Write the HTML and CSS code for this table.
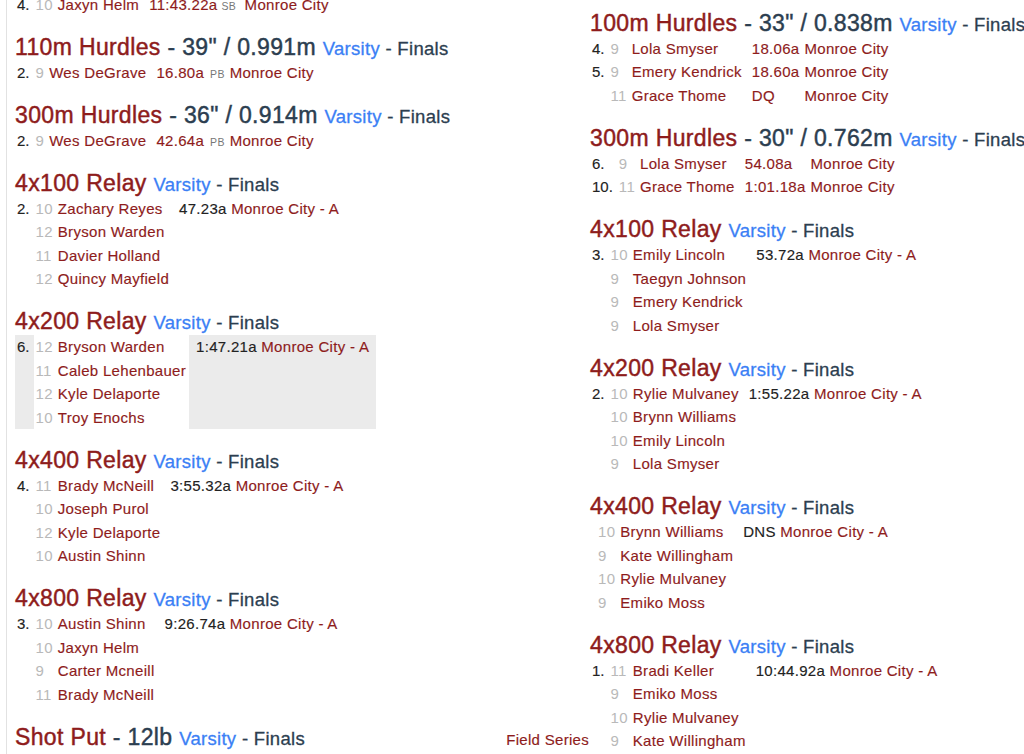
FILE: index.html
```html
<!DOCTYPE html>
<html lang="en">
<head>
<meta charset="utf-8">
<title>Results</title>
<link rel="stylesheet" href="styles.css">
</head>
<body>
<div class="page">
  <div class="sheet">
    <div class="col col-left">
      <div class="event">
        <table class="res prev">
          <tr><td class="pl">4.</td><td class="gr">10</td><td class="nm wide">Jaxyn Helm</td><td class="mk ind">11:43.22a<span class="tag tight">SB</span></td><td class="tm far">Monroe City</td></tr>
        </table>
      </div>

      <div class="event">
        <h3 class="ev-title"><span><span class="ev">110m Hurdles</span><span class="dim"> - 39" / 0.991m</span> <span class="lvl">Varsity</span><span class="rnd"> - Finals</span></span></h3>
        <table class="res">
          <tr><td class="pl">2.</td><td class="gr">9</td><td class="nm">Wes DeGrave</td><td class="mk ind">16.80a<span class="tag">PB</span></td><td class="tm">Monroe City</td></tr>
        </table>
      </div>

      <div class="event">
        <h3 class="ev-title"><span><span class="ev">300m Hurdles</span><span class="dim"> - 36" / 0.914m</span> <span class="lvl">Varsity</span><span class="rnd"> - Finals</span></span></h3>
        <table class="res">
          <tr><td class="pl">2.</td><td class="gr">9</td><td class="nm">Wes DeGrave</td><td class="mk ind">42.64a<span class="tag">PB</span></td><td class="tm">Monroe City</td></tr>
        </table>
      </div>

      <div class="event">
        <h3 class="ev-title"><span><span class="ev">4x100 Relay</span> <span class="lvl">Varsity</span><span class="rnd"> - Finals</span></span></h3>
        <table class="res">
          <tr><td class="pl" rowspan="4">2.</td><td class="gr">10</td><td class="nm">Zachary Reyes</td><td class="mk relay" rowspan="4">47.23a <span class="team">Monroe City - A</span></td></tr>
          <tr><td class="gr">12</td><td class="nm">Bryson Warden</td></tr>
          <tr><td class="gr">11</td><td class="nm">Davier Holland</td></tr>
          <tr><td class="gr">12</td><td class="nm">Quincy Mayfield</td></tr>
        </table>
      </div>

      <div class="event">
        <h3 class="ev-title"><span><span class="ev">4x200 Relay</span> <span class="lvl">Varsity</span><span class="rnd"> - Finals</span></span></h3>
        <table class="res hl">
          <tr><td class="pl" rowspan="4">6.</td><td class="gr">12</td><td class="nm">Bryson Warden</td><td class="mk relay" rowspan="4">1:47.21a <span class="team">Monroe City - A</span></td></tr>
          <tr><td class="gr">11</td><td class="nm">Caleb Lehenbauer</td></tr>
          <tr><td class="gr">12</td><td class="nm">Kyle Delaporte</td></tr>
          <tr><td class="gr">10</td><td class="nm">Troy Enochs</td></tr>
        </table>
      </div>

      <div class="event">
        <h3 class="ev-title"><span><span class="ev">4x400 Relay</span> <span class="lvl">Varsity</span><span class="rnd"> - Finals</span></span></h3>
        <table class="res">
          <tr><td class="pl" rowspan="4">4.</td><td class="gr">11</td><td class="nm">Brady McNeill</td><td class="mk relay" rowspan="4">3:55.32a <span class="team">Monroe City - A</span></td></tr>
          <tr><td class="gr">10</td><td class="nm">Joseph Purol</td></tr>
          <tr><td class="gr">12</td><td class="nm">Kyle Delaporte</td></tr>
          <tr><td class="gr">10</td><td class="nm">Austin Shinn</td></tr>
        </table>
      </div>

      <div class="event">
        <h3 class="ev-title"><span><span class="ev">4x800 Relay</span> <span class="lvl">Varsity</span><span class="rnd"> - Finals</span></span></h3>
        <table class="res">
          <tr><td class="pl" rowspan="4">3.</td><td class="gr">10</td><td class="nm">Austin Shinn</td><td class="mk relay" rowspan="4">9:26.74a <span class="team">Monroe City - A</span></td></tr>
          <tr><td class="gr">10</td><td class="nm">Jaxyn Helm</td></tr>
          <tr><td class="gr">9</td><td class="nm">Carter Mcneill</td></tr>
          <tr><td class="gr">11</td><td class="nm">Brady McNeill</td></tr>
        </table>
      </div>

      <div class="event">
        <h3 class="ev-title"><span><span class="ev">Shot Put</span><span class="dim"> - 12lb</span> <span class="lvl">Varsity</span><span class="rnd"> - Finals</span></span><a class="series">Field Series</a></h3>
      </div>
    </div>

    <div class="col col-right">
      <div class="event">
        <h3 class="ev-title"><span><span class="ev">100m Hurdles</span><span class="dim"> - 33" / 0.838m</span> <span class="lvl">Varsity</span><span class="rnd"> - Finals</span></span></h3>
        <table class="res">
          <tr><td class="pl">4.</td><td class="gr">9</td><td class="nm">Lola Smyser</td><td class="mk ind">18.06a</td><td class="tm">Monroe City</td></tr>
          <tr><td class="pl">5.</td><td class="gr">9</td><td class="nm">Emery Kendrick</td><td class="mk ind">18.60a</td><td class="tm">Monroe City</td></tr>
          <tr><td class="pl"></td><td class="gr">11</td><td class="nm">Grace Thome</td><td class="mk ind">DQ</td><td class="tm">Monroe City</td></tr>
        </table>
      </div>

      <div class="event">
        <h3 class="ev-title"><span><span class="ev">300m Hurdles</span><span class="dim"> - 30" / 0.762m</span> <span class="lvl">Varsity</span><span class="rnd"> - Finals</span></span></h3>
        <table class="res">
          <tr><td class="pl">6.</td><td class="gr">9</td><td class="nm">Lola Smyser</td><td class="mk ind">54.08a</td><td class="tm">Monroe City</td></tr>
          <tr><td class="pl">10.</td><td class="gr">11</td><td class="nm">Grace Thome</td><td class="mk ind">1:01.18a</td><td class="tm">Monroe City</td></tr>
        </table>
      </div>

      <div class="event">
        <h3 class="ev-title"><span><span class="ev">4x100 Relay</span> <span class="lvl">Varsity</span><span class="rnd"> - Finals</span></span></h3>
        <table class="res">
          <tr><td class="pl" rowspan="4">3.</td><td class="gr">10</td><td class="nm">Emily Lincoln</td><td class="mk relay" rowspan="4">53.72a <span class="team">Monroe City - A</span></td></tr>
          <tr><td class="gr">9</td><td class="nm">Taegyn Johnson</td></tr>
          <tr><td class="gr">9</td><td class="nm">Emery Kendrick</td></tr>
          <tr><td class="gr">9</td><td class="nm">Lola Smyser</td></tr>
        </table>
      </div>

      <div class="event">
        <h3 class="ev-title"><span><span class="ev">4x200 Relay</span> <span class="lvl">Varsity</span><span class="rnd"> - Finals</span></span></h3>
        <table class="res">
          <tr><td class="pl" rowspan="4">2.</td><td class="gr">10</td><td class="nm">Rylie Mulvaney</td><td class="mk relay" rowspan="4">1:55.22a <span class="team">Monroe City - A</span></td></tr>
          <tr><td class="gr">10</td><td class="nm">Brynn Williams</td></tr>
          <tr><td class="gr">10</td><td class="nm">Emily Lincoln</td></tr>
          <tr><td class="gr">9</td><td class="nm">Lola Smyser</td></tr>
        </table>
      </div>

      <div class="event">
        <h3 class="ev-title"><span><span class="ev">4x400 Relay</span> <span class="lvl">Varsity</span><span class="rnd"> - Finals</span></span></h3>
        <table class="res">
          <tr><td class="pl" rowspan="4"></td><td class="gr">10</td><td class="nm">Brynn Williams</td><td class="mk relay" rowspan="4">DNS <span class="team">Monroe City - A</span></td></tr>
          <tr><td class="gr">9</td><td class="nm">Kate Willingham</td></tr>
          <tr><td class="gr">10</td><td class="nm">Rylie Mulvaney</td></tr>
          <tr><td class="gr">9</td><td class="nm">Emiko Moss</td></tr>
        </table>
      </div>

      <div class="event">
        <h3 class="ev-title"><span><span class="ev">4x800 Relay</span> <span class="lvl">Varsity</span><span class="rnd"> - Finals</span></span></h3>
        <table class="res">
          <tr><td class="pl" rowspan="4">1.</td><td class="gr">11</td><td class="nm">Bradi Keller</td><td class="mk relay" rowspan="4">10:44.92a <span class="team">Monroe City - A</span></td></tr>
          <tr><td class="gr">9</td><td class="nm">Emiko Moss</td></tr>
          <tr><td class="gr">10</td><td class="nm">Rylie Mulvaney</td></tr>
          <tr><td class="gr">9</td><td class="nm">Kate Willingham</td></tr>
        </table>
      </div>
    </div>
  </div>
</div>
</body>
</html>
```
FILE: styles.css
```css
html, body {
  margin: 0;
  padding: 0;
  overflow: hidden;
  background: #ffffff;
}

body {
  font-family: "Liberation Sans", Arial, Helvetica, sans-serif;
  font-size: 15px;
  color: #222222;
  letter-spacing: 0.3px;
  -webkit-text-stroke: 0.15px;
}

.page {
  padding-left: 6px;
  height: 754px;
  overflow: hidden;
}

.sheet {
  display: grid;
  grid-template-columns: 575px 575px;
  align-items: start;
  border-left: 1px solid #e2e2e2;
  padding-left: 8px;
  min-height: 800px;
}

.col-left {
  margin-top: -7.5px;
}

.col-right {
  padding-top: 9.5px;
}

.event {
  margin-bottom: 17.5px;
}

.ev-title {
  display: flex;
  align-items: baseline;
  height: 27px;
  margin: 0;
  font-size: 23px;
  line-height: 27px;
  font-weight: normal;
  letter-spacing: 0.35px;
  -webkit-text-stroke: 0.45px;
  white-space: nowrap;
  color: #8e1c1c;
}

.ev {
  color: #8e1c1c;
}

.dim {
  color: #2c3e50;
}

.lvl {
  color: #3b7ff5;
  font-size: 18.5px;
  line-height: 1;
  letter-spacing: 0.3px;
  -webkit-text-stroke: 0.3px;
}

.rnd {
  color: #2c3e50;
  font-size: 18.5px;
  line-height: 1;
  letter-spacing: 0.3px;
  -webkit-text-stroke: 0.3px;
}

.series {
  margin-left: auto;
  margin-right: 1px;
  font-size: 15px;
  line-height: 1;
  color: #8e1c1c;
  letter-spacing: 0.3px;
  -webkit-text-stroke: 0.15px;
}

.res {
  border-collapse: collapse;
  border-spacing: 0;
}

.res td {
  padding: 0;
  height: 23.5px;
  line-height: 23.5px;
  vertical-align: top;
  white-space: nowrap;
}

.res .pl {
  padding: 0 4px 0 2px;
  color: #222222;
  letter-spacing: 0;
}

.res .gr {
  padding: 0 2px 0 2px;
  color: #b9b9b9;
  -webkit-text-stroke: 0;
}

.res .nm {
  padding: 0 3px;
  color: #8e1c1c;
}

.res .nm.wide {
  width: 76px;
}

.res .mk {
  padding: 0 2.5px 0 7px;
  color: #222222;
}

.res .mk.ind {
  color: #8e1c1c;
}

.res .mk.relay {
  padding-right: 6.5px;
}

.res .tm {
  padding: 0 6px 0 2.5px;
  color: #8e1c1c;
}

.res .tm.far {
  padding-left: 6px;
}

.team {
  color: #8e1c1c;
}

.tag {
  font-size: 10.5px;
  line-height: 1;
  color: #777777;
  margin-left: 6px;
  letter-spacing: 0.3px;
  -webkit-text-stroke: 0;
}

.tag.tight {
  margin-left: 4px;
}

.hl .pl,
.hl .mk {
  background: #ebebeb;
}
```
